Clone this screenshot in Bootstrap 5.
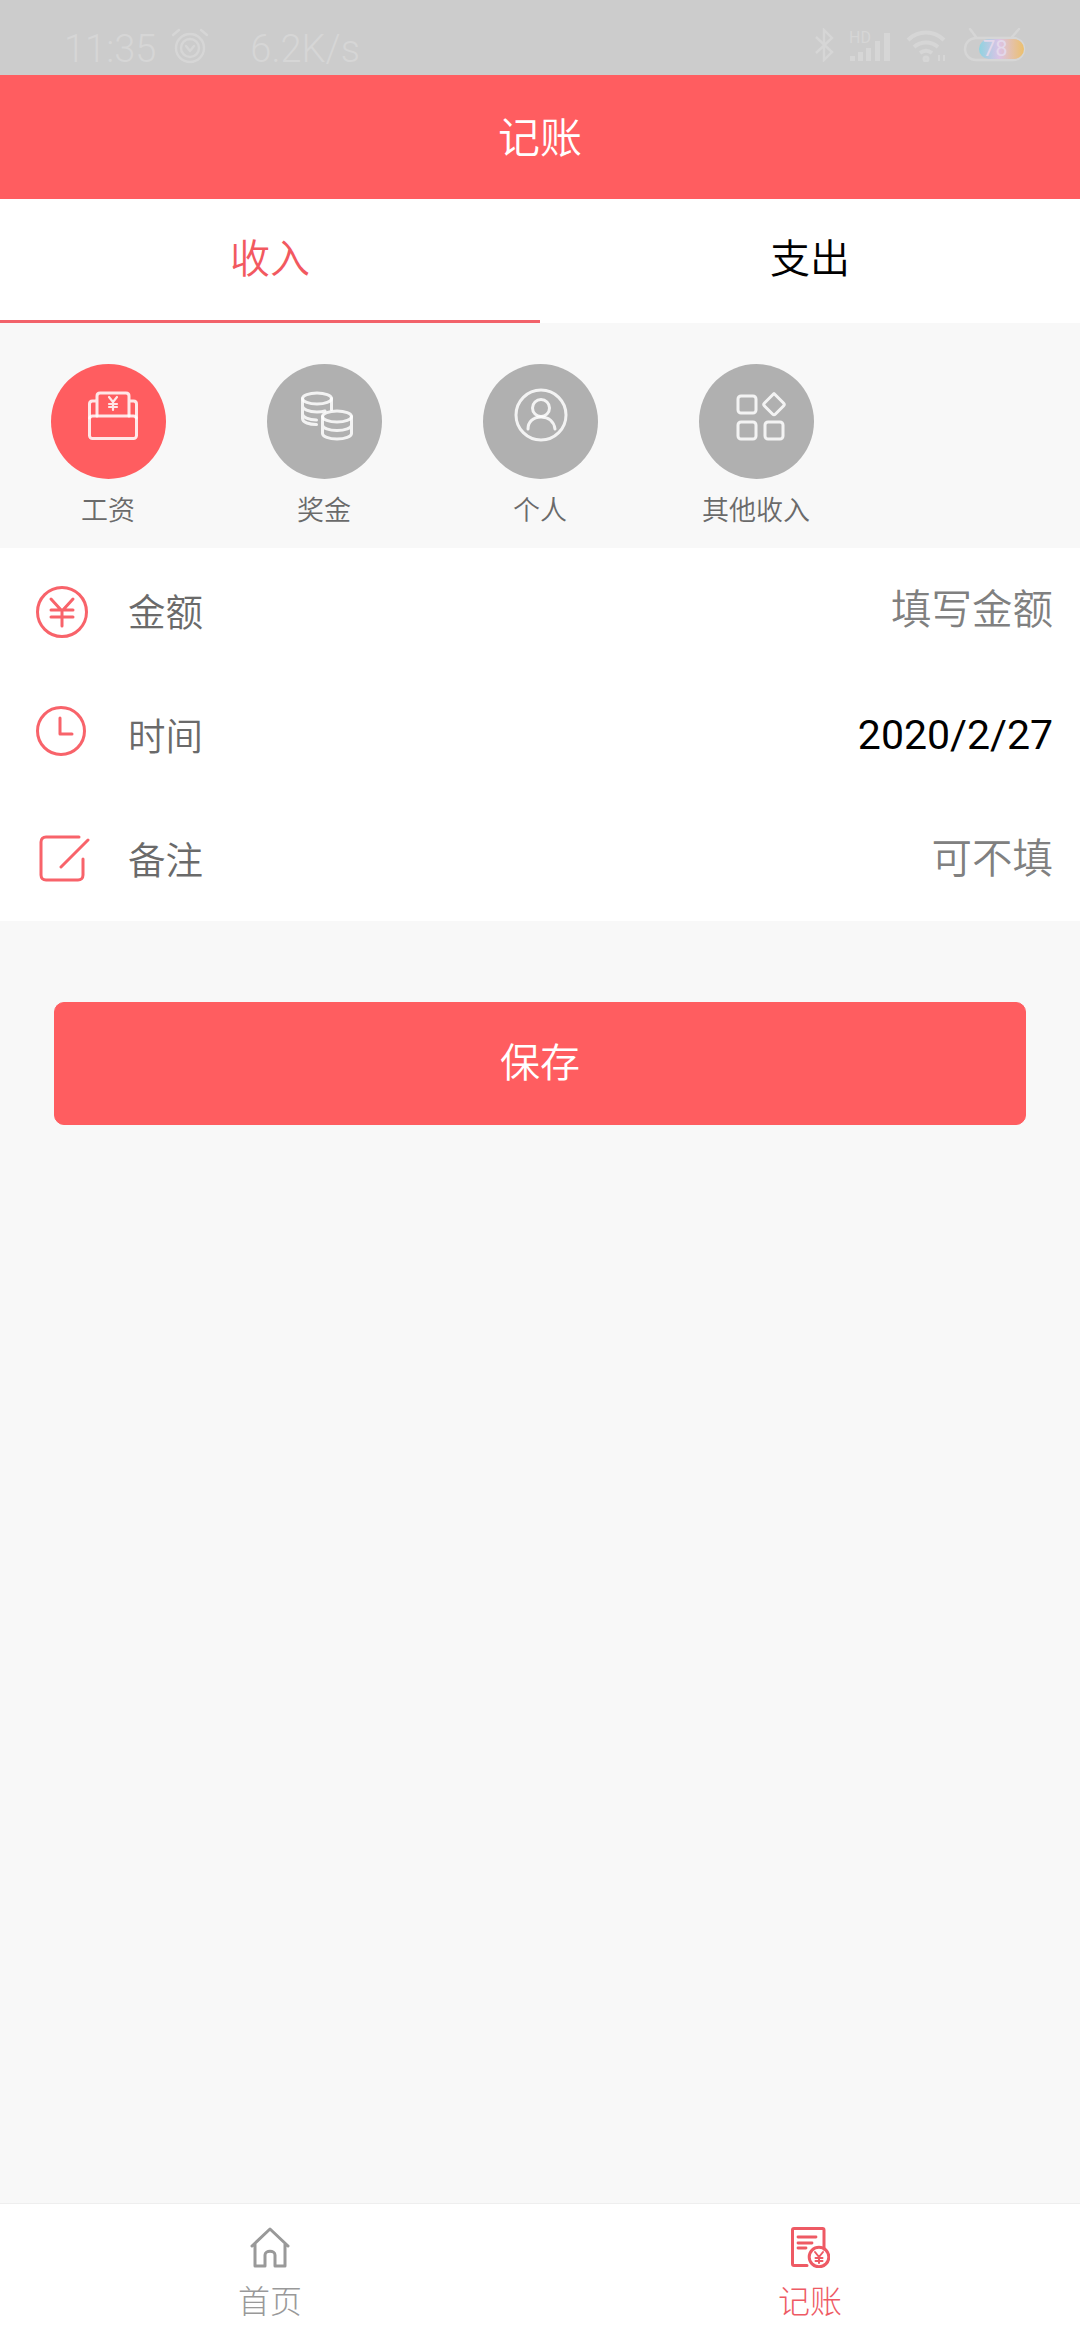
<!DOCTYPE html>
<html lang="zh-CN">
<head>
  <meta charset="UTF-8" />
  <meta name="viewport" content="width=device-width, initial-scale=1" />
  <title>记账</title>
  <link href="https://cdn.jsdelivr.net/npm/bootstrap@5.3.0/dist/css/bootstrap.min.css" rel="stylesheet" />
  <style>
    body { width: 1080px; height: 2340px; overflow: hidden; background: #f8f8f8; font-family: "Noto Sans CJK SC", sans-serif; font-weight: 350; }
    .app-shell { height: 2340px; }
    /* status bar */
    .status-strip { height: 75px; background: #cccccc; color: #d6d6d6; font-family: Roboto, sans-serif; font-weight: 300; font-size: 38px; line-height: 1; padding: 30px 54px 0 64px; }
    .status-speed { margin-left: 40px; }
    .status-alarm { margin: -3px 0 0 14px; }
    .status-icons { gap: 15px; margin-top: -2px; }
    /* header */
    .app-title { height: 124px; padding-bottom: 6px; background: #ff5d60; color: #fff; font-size: 42px; }
    /* tabs */
    .tab-strip { background: #fff; height: 124px; }
    .tab-strip .nav-link { height: 124px; padding: 0 0 11px; color: #000; font-size: 40px; font-weight: 350; border-radius: 0; display: flex; align-items: center; justify-content: center; }
    .tab-strip .nav-link.active { color: #f2595f; padding-bottom: 8px; border-bottom: 3px solid #f2626a; }
    /* categories */
    .cat-strip { height: 225px; padding-top: 41px; background: #f8f8f8; }
    .cat-cell { width: 216px; color: #6a6a6a; font-size: 27px; line-height: 1; }
    .cat-disc { width: 115px; height: 115px; border-radius: 50%; background: #b0b0b0; margin-bottom: 16px; }
    .cat-disc.on { background: #ff5d60; }
    .cat-disc svg { display: block; fill: none; stroke: #fff; stroke-opacity: .85; stroke-width: 3; stroke-linecap: round; stroke-linejoin: round; }
    /* form rows */
    .entry-list { border-radius: 0; }
    .entry-list .list-group-item { height: 124.33px; border: 0; padding: 0 27px 0 34px; display: flex; align-items: center; }
    .entry-icon { width: 56px; height: 56px; flex: none; margin-right: 38px; fill: none; stroke: #f8636a; stroke-width: 3; stroke-linecap: round; stroke-linejoin: round; }
    .entry-label { color: #6a6a6a; font-size: 37.5px; padding-bottom: 1px; }
    .entry-value { margin-left: auto; color: #808080; font-size: 40.5px; line-height: 1; padding-bottom: 6px; }
    .entry-value.filled { color: #000; font-family: Roboto, sans-serif; font-size: 41px; font-weight: 400; padding: 2px 0 0; }
    /* save */
    .save-wrap { padding: 81px 54px 0; }
    .save-btn { height: 123px; padding-bottom: 12px; background: #ff5d60; border-color: #ff5d60; color: #fff; font-size: 40px; font-weight: 350; border-radius: 10px; }
    /* bottom tabs */
    .foot-bar { height: 137px; background: #fff; border-top: 1px solid #eeeeee; }
    .foot-item { width: 540px; color: #999; font-size: 32px; font-weight: 300; line-height: 1; padding-top: 23px; }
    .foot-item.on { color: #ee5a64; }
    .foot-item svg { display: block; margin-bottom: 15px; fill: none; stroke: currentColor; stroke-width: 3; stroke-linecap: round; stroke-linejoin: round; }
  </style>
</head>
<body>
  <div class="app-shell d-flex flex-column">

    <div class="status-strip d-flex justify-content-between">
      <div class="d-flex align-items-start">
        <span>11:35</span>
        <svg class="status-alarm" width="40" height="38" viewBox="0 0 40 38" fill="none" stroke="#d6d6d6" stroke-width="2.4" stroke-linecap="round" stroke-linejoin="round">
          <circle cx="20" cy="21" r="14" /><circle cx="20" cy="21" r="9" />
          <path d="M16 19l4 5 4-5M3 8l6-5M37 8l-6-5" />
        </svg>
        <span class="status-speed">6.2K/s</span>
      </div>
      <div class="status-icons d-flex align-items-start">
        <svg width="20" height="34" viewBox="0 0 20 34" fill="none" stroke="#d6d6d6" stroke-width="2.4"><path d="M2 9l16 15-8 8V2l8 8L2 25" /></svg>
        <svg width="42" height="34" viewBox="0 0 42 34" fill="#d6d6d6">
          <rect x="1" y="28" width="5" height="5" /><rect x="9" y="24" width="5" height="9" /><rect x="17" y="20" width="5" height="13" /><rect x="26" y="13" width="5" height="20" /><rect x="35" y="5" width="6" height="28" />
          <text x="0" y="15" font-family="Roboto" font-size="16" font-weight="400">HD</text>
        </svg>
        <svg width="42" height="34" viewBox="0 0 42 34" fill="none" stroke="#d6d6d6" stroke-width="4">
          <path d="M2 12c10-10 26-10 36 0M8 19c7-6 17-6 24 0M14 25c4-3 8-3 12 0" /><circle cx="20" cy="31" r="1.5" /><path d="M33 27v6M38 27v6" stroke-width="2" />
        </svg>
        <svg width="63" height="34" viewBox="0 0 63 34">
          <defs><linearGradient id="battFill" x1="0" x2="1" y1="0" y2="0"><stop offset="0" stop-color="#8fd3e0" /><stop offset=".45" stop-color="#dcc3e6" /><stop offset="1" stop-color="#ecc06c" /></linearGradient></defs>
          <path d="M7 1l6 8M56 1l-7 8" stroke="#d6d6d6" stroke-width="2.4" stroke-linecap="round" />
          <rect x="2" y="10" width="59" height="22" rx="11" fill="none" stroke="#d6d6d6" stroke-width="2.4" />
          <rect x="16" y="11" width="45" height="20" rx="10" fill="url(#battFill)" />
          <text x="20" y="28" font-family="Roboto" font-size="22" font-weight="400" fill="#e3d8ea">78</text>
        </svg>
      </div>
    </div>

    <div class="app-title d-flex align-items-center justify-content-center">记账</div>

    <nav class="tab-strip nav nav-fill">
      <a class="nav-link active" href="#">收入</a>
      <a class="nav-link" href="#">支出</a>
    </nav>

    <div class="cat-strip d-flex">
      <div class="cat-cell d-flex flex-column align-items-center">
        <div class="cat-disc on">
          <svg width="115" height="115" viewBox="0 0 115 115">
            <rect x="38.5" y="52" width="47" height="22.5" rx="3" />
            <path d="M38.5 54V40c0-2 1-3 3-3h3M85.500 54V40c0-2-1-3-3-3h-3M46 52V32c0-2 1-3 3-3h26c2 0 3 1 3 3v20" />
            <path d="M58 33l4 5 4-5M62 38v8M58 40h8M58 43h8" stroke-width="2.200" />
          </svg>
        </div>
        <span>工资</span>
      </div>
      <div class="cat-cell d-flex flex-column align-items-center">
        <div class="cat-disc">
          <svg width="115" height="115" viewBox="0 0 115 115">
            <ellipse cx="50" cy="34.500" rx="14.500" ry="5.500" />
            <path d="M35.500 34.500v20c0 4 7 6 14 6M35.500 42c0 3 6 6 14.500 6 3 0 6-.4 8-1M35.500 50c0 3 6 6 14 6" />
            <path d="M64.500 34.500v11" />
            <ellipse cx="70" cy="52.500" rx="14.500" ry="5.500" />
            <path d="M55.500 52.500v17c0 3 6.500 5.500 14.500 5.500s14.500-2.500 14.500-5.500v-17M55.500 61c0 3 6.500 5.500 14.500 5.500s14.500-2.500 14.500-5.500" />
          </svg>
        </div>
        <span>奖金</span>
      </div>
      <div class="cat-cell d-flex flex-column align-items-center">
        <div class="cat-disc">
          <svg width="115" height="115" viewBox="0 0 115 115">
            <circle cx="58" cy="51" r="25" />
            <circle cx="58" cy="44" r="8.500" />
            <path d="M45 65c0-7 5-12 13-12s13 5 14 12" />
          </svg>
        </div>
        <span>个人</span>
      </div>
      <div class="cat-cell d-flex flex-column align-items-center">
        <div class="cat-disc">
          <svg width="115" height="115" viewBox="0 0 115 115">
            <rect x="39" y="32" width="18" height="17" rx="3" />
            <rect x="39" y="58" width="18" height="17" rx="3" />
            <rect x="66" y="58" width="18" height="17" rx="3" />
            <path d="M75 29.500l9.500 9.500c1 1 1 2 0 3l-8 8c-1 1-2 1-3 0l-8-8c-1-1-1-2 0-3z" />
          </svg>
        </div>
        <span>其他收入</span>
      </div>
    </div>

    <div class="entry-list list-group list-group-flush">
      <div class="list-group-item">
        <svg class="entry-icon" viewBox="0 0 56 56">
          <circle cx="28" cy="30" r="24.500" />
          <path d="M17 17l11 12 11-12M28 29v15M17 28h22M17 35h22" />
        </svg>
        <span class="entry-label">金额</span>
        <span class="entry-value">填写金额</span>
      </div>
      <div class="list-group-item">
        <svg class="entry-icon" viewBox="0 0 56 56">
          <circle cx="27" cy="25" r="23.500" />
          <path d="M26 12v16h12" />
        </svg>
        <span class="entry-label">时间</span>
        <span class="entry-value filled">2020/2/27</span>
      </div>
      <div class="list-group-item">
        <svg class="entry-icon" viewBox="0 0 56 56">
          <path d="M45 6H12c-3 0-5 2-5 5v33c0 3 2 5 5 5h32c3 0 5-2 5-5V28" />
          <path d="M27 36L54 9" />
        </svg>
        <span class="entry-label">备注</span>
        <span class="entry-value">可不填</span>
      </div>
    </div>

    <div class="save-wrap flex-grow-1">
      <button type="button" class="save-btn btn w-100">保存</button>
    </div>

    <div class="foot-bar d-flex">
      <div class="foot-item d-flex flex-column align-items-center">
        <svg width="40" height="41" viewBox="0 0 40 41">
          <path d="M2 19L20 2l18 17M5 17v22h10V28c0-5 10-5 10 0v11h10V17" />
        </svg>
        <span>首页</span>
      </div>
      <div class="foot-item on d-flex flex-column align-items-center">
        <svg width="40" height="41" viewBox="0 0 40 41">
          <path d="M34 22V3c0-1-.5-1.500-1.500-1.500H4c-1 0-1.500.5-1.500 1.500v34c0 1 .5 1.500 1.500 1.500h13" />
          <path d="M8 10h18M8 16h14M8 21h8" stroke-width="2.800" />
          <circle cx="29" cy="30" r="9.800" />
          <path d="M25 25l4 5 4-5M29 30v6M25.500 31h7M25.500 34h7" stroke-width="2" />
        </svg>
        <span>记账</span>
      </div>
    </div>

  </div>
  <script src="https://cdn.jsdelivr.net/npm/bootstrap@5.3.0/dist/js/bootstrap.bundle.min.js"></script>
</body>
</html>
